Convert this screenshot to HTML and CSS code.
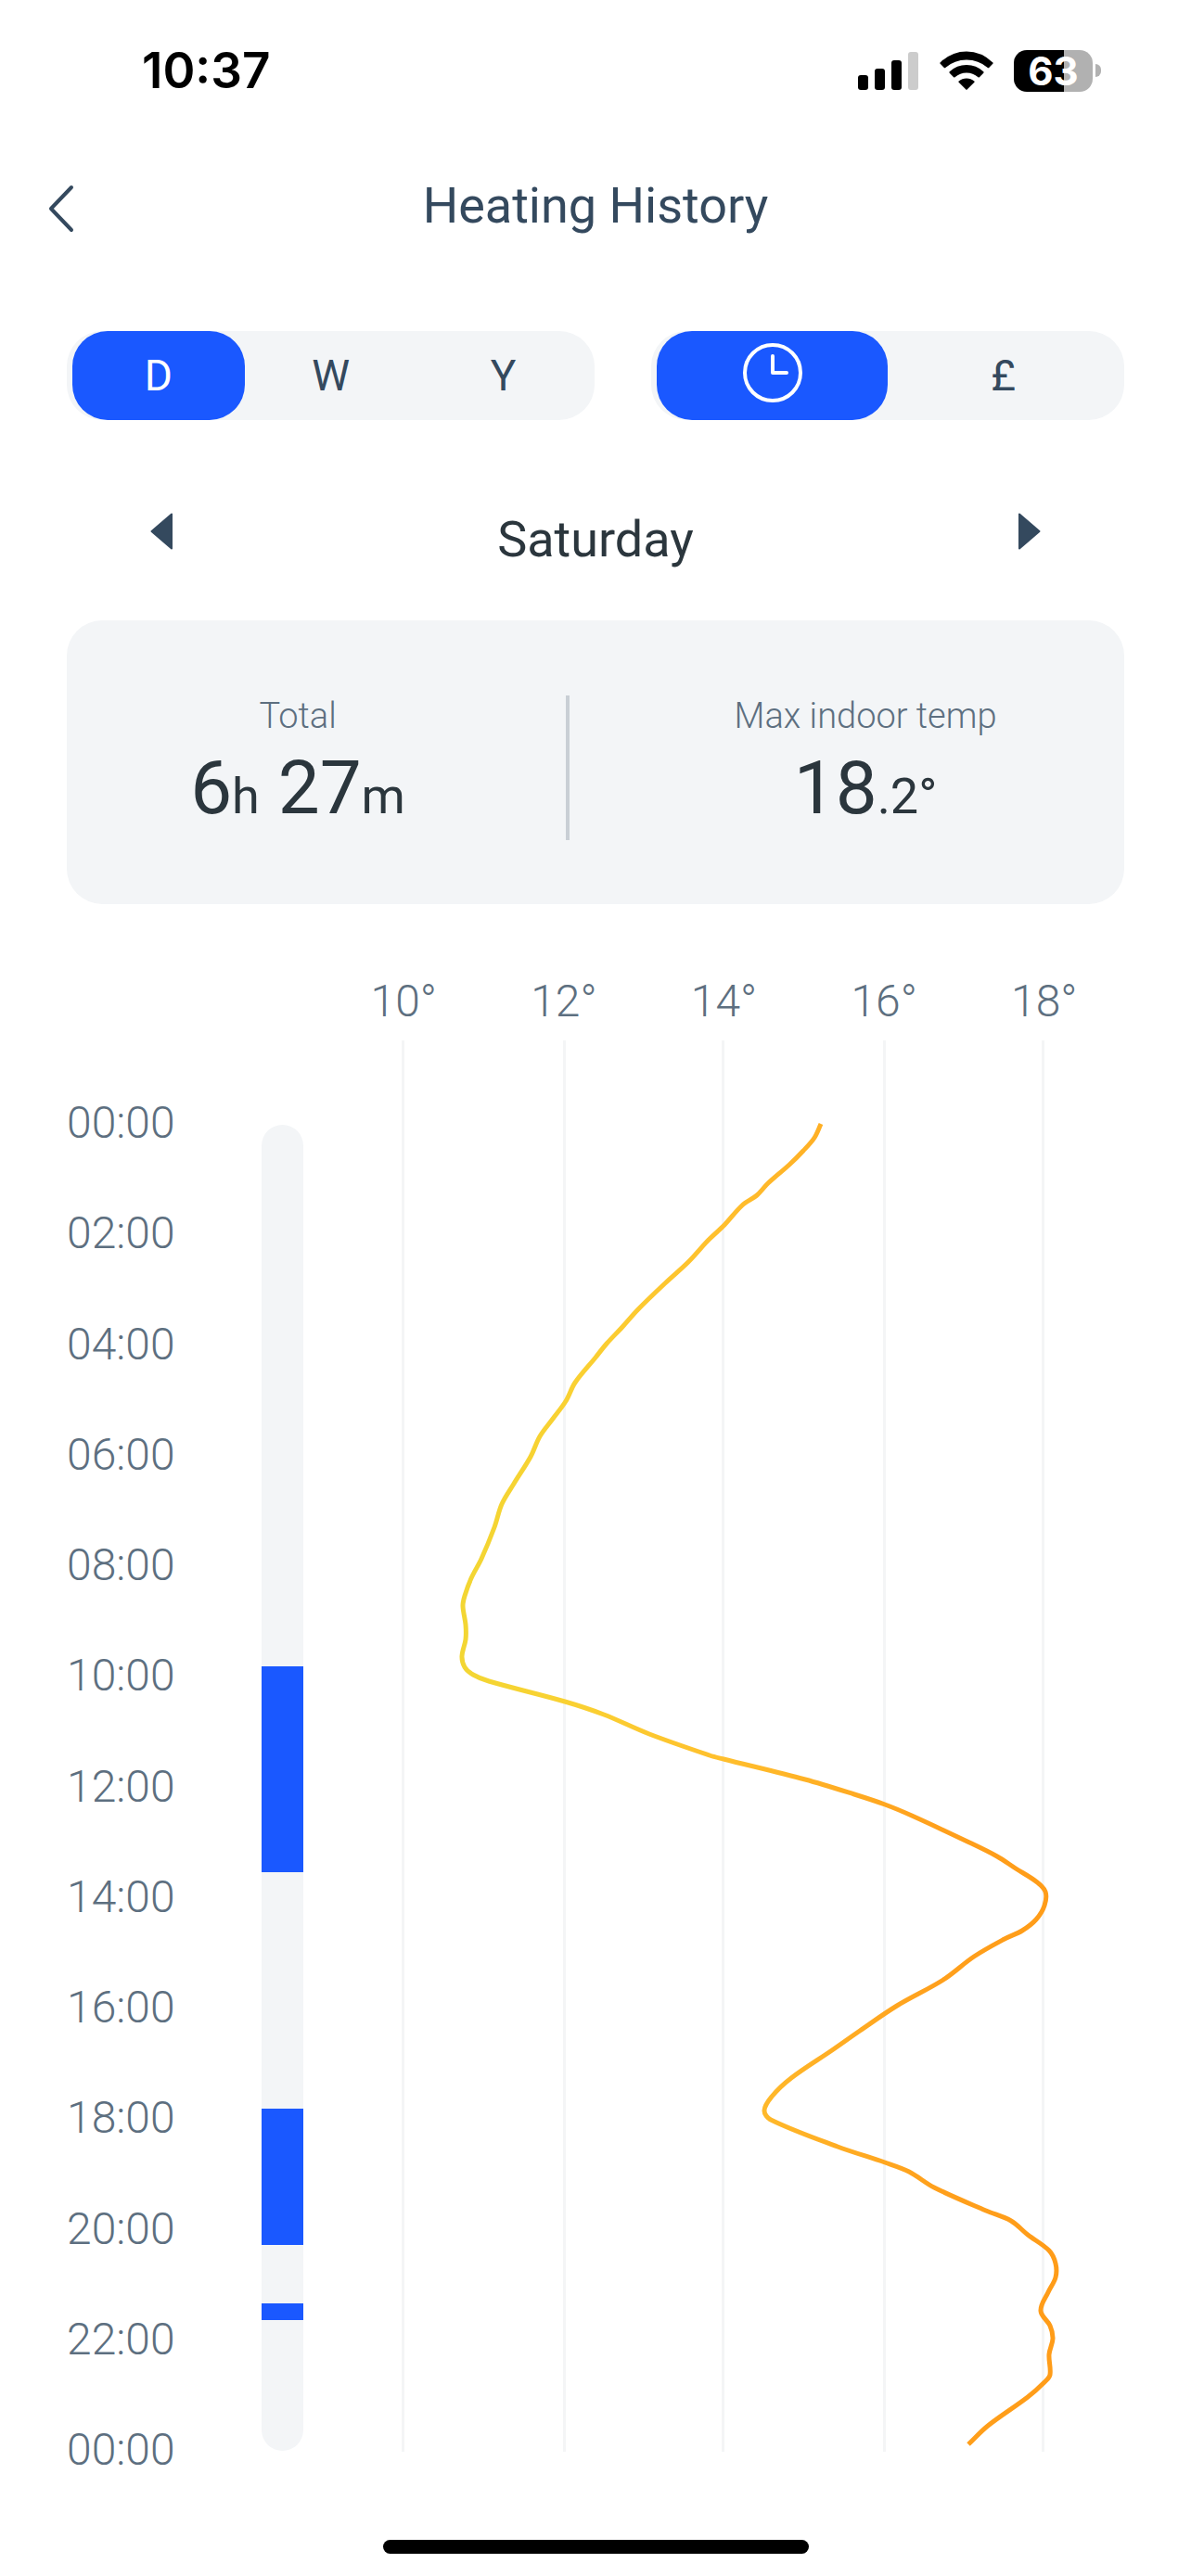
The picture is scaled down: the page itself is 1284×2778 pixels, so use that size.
FILE: index.html
```html
<!DOCTYPE html>
<html lang="en">
<head>
	<meta charset="UTF-8">
	<meta name="viewport" content="width=device-width">
	<title>Heating History</title>
	<link rel="stylesheet" href="styles.css">
</head>
<body>
	<div class="status">
		<span class="clock">10:37</span>
		<div class="status-icons">
			<svg class="signal" width="65" height="42" viewBox="0 0 65 42">
				<rect x="0" y="26" width="11" height="16" rx="3"/>
				<rect x="18" y="19" width="11" height="23" rx="3"/>
				<rect x="36" y="10" width="11" height="32" rx="3"/>
				<rect x="54" y="1" width="11" height="41" rx="3" fill="#ccc"/>
			</svg>
			<svg class="wifi" width="58" height="42" viewBox="0 0 58 42">
				<path d="M0.5 13.5Q0 13 0.6 12.4Q13 0.4 29 0.4Q45 0.4 57.4 12.4Q58 13 57.500 13.5L53.200 18Q52.500 18.700 51.800 18Q42 9.500 29 9.500Q16 9.500 6.200 18Q5.500 18.700 4.800 18Z"/>
				<path d="M10.700 23.700Q10 23 10.700 22.300Q18.500 15 29 15Q39.500 15 47.300 22.300Q48 23 47.300 23.700L42.900 28.200Q42.200 28.800 41.500 28.200Q36 23.500 29 23.500Q22 23.500 16.500 28.200Q15.800 28.800 15.100 28.200Z"/>
				<path d="M20.600 33.800Q20 33.200 20.700 32.600Q24.200 29.500 29 29.500Q33.800 29.500 37.300 32.600Q38 33.200 37.400 33.800L29.600 41.600Q29 42.200 28.400 41.600Z"/>
			</svg>
			<div class="battery"><span>63</span></div>
		</div>
	</div>

	<div class="header">
		<button class="back" aria-label="Back">
			<svg width="30" height="58" viewBox="0 0 30 58"><path d="M26 9L4 32L26 55"/></svg>
		</button>
		<h1>Heating History</h1>
	</div>

	<div class="main">
		<div class="tabs">
			<div class="tab-list period">
				<button class="active">D</button>
				<button>W</button>
				<button>Y</button>
			</div>
			<div class="tab-list unit">
				<button class="active" aria-label="Time">
					<svg width="64" height="64" viewBox="0 0 64 64"><circle cx="32" cy="32" r="30"/><path d="M32 14V32H47"/></svg>
				</button>
				<button>£</button>
			</div>
		</div>

		<div class="day">
			<button aria-label="Previous day"><svg width="24" height="40" viewBox="0 0 24 40"><path d="M23 1.500V38.500L1.500 20Z"/></svg></button>
			<h2>Saturday</h2>
			<button aria-label="Next day"><svg width="24" height="40" viewBox="0 0 24 40"><path d="M1 1.500V38.500L22.500 20Z"/></svg></button>
		</div>

		<div class="card">
			<div class="stat">
				<p class="label">Total</p>
				<p class="value">6<small>h</small> 27<small>m</small></p>
			</div>
			<div class="line"></div>
			<div class="stat">
				<p class="label">Max indoor temp</p>
				<p class="value">18<small>.2°</small></p>
			</div>
		</div>

		<div class="chart">
			<ul class="times">
				<li>00:00</li>
				<li>02:00</li>
				<li>04:00</li>
				<li>06:00</li>
				<li>08:00</li>
				<li>10:00</li>
				<li>12:00</li>
				<li>14:00</li>
				<li>16:00</li>
				<li>18:00</li>
				<li>20:00</li>
				<li>22:00</li>
				<li>00:00</li>
			</ul>
			<div class="usage">
				<i style="top: 40.84%; height: 15.52%"></i>
				<i style="top: 74.2%; height: 10.28%"></i>
				<i style="top: 88.88%; height: 1.26%"></i>
			</div>
			<div class="plot">
				<div class="temps">
					<span>10°</span>
					<span>12°</span>
					<span>14°</span>
					<span>16°</span>
					<span>18°</span>
				</div>
				<svg class="graph" viewBox="349 1122 863 1522" preserveAspectRatio="none">
					<defs>
						<linearGradient id="heat" gradientUnits="userSpaceOnUse" x1="500" y1="0" x2="1138" y2="0">
							<stop offset="0" stop-color="#f3d633"/>
							<stop offset="0.2" stop-color="#fad032"/>
							<stop offset="0.44" stop-color="#ffbf2d"/>
							<stop offset="0.62" stop-color="#ffae24"/>
							<stop offset="0.8" stop-color="#ffa01c"/>
							<stop offset="1" stop-color="#ff9c18"/>
						</linearGradient>
					</defs>
					<g class="grid">
						<path d="M434.500 1122V2644"/>
						<path d="M608.500 1122V2644"/>
						<path d="M779.500 1122V2644"/>
						<path d="M953.500 1122V2644"/>
						<path d="M1124.500 1122V2644"/>
					</g>
					<path id="curve" stroke="url(#heat)"/>
				</svg>
			</div>
		</div>
	</div>

	<div class="home"></div>
	<script src="chart.js"></script>
</body>
</html>
```
FILE: styles.css
```css
*{
	box-sizing: border-box;
	margin: 0;
	padding: 0;
}
body{
	background: #fff;
	color: #34495e;
	font-family: Roboto, "Liberation Sans", sans-serif;
}
button{
	border: 0;
	background: none;
	color: inherit;
	font: inherit;
	cursor: pointer;
}
svg{
	display: block;
}
/* status bar */
.status{
	display: flex;
	justify-content: space-between;
	align-items: center;
	height: 152px;
	padding: 0 97px 0 153px;
	color: #000;
	font-family: Inter, sans-serif;
}
.clock{
	font-size: 53px;
	font-weight: 600;
}
.status-icons{
	display: flex;
	align-items: center;
}
.wifi{
	margin: 0 22px 0 23px;
}
.battery{
	position: relative;
	width: 85px;
	height: 45px;
	margin-right: 9px;
	border-radius: 14px;
	background: linear-gradient(to right, #000 54px, #b1b1b1 54px);
	color: #fff;
	font-size: 42px;
	font-weight: 700;
	line-height: 45px;
	text-align: center;
}
.battery:after{
	content: "";
	position: absolute;
	right: -9px;
	top: 15px;
	width: 6px;
	height: 14px;
	border-radius: 0 6px 6px 0;
	background: #b1b1b1;
}
/* header */
.header{
	display: grid;
	grid-template-columns: 100px 1fr 100px;
	align-items: center;
	height: 139px;
	padding: 0 51px;
}
.header h1{
	font-size: 54px;
	font-weight: 400;
	text-align: center;
}
.back{
	justify-self: start;
}
.back path{
	fill: none;
	stroke: #34495e;
	stroke-width: 4;
	stroke-linecap: round;
	stroke-linejoin: round;
}
.main{
	padding: 66px 72px 0;
}
/* tabs */
.tabs{
	display: flex;
	gap: 61px;
}
.tab-list{
	display: flex;
	height: 96px;
	padding: 0 6px;
	border-radius: 38px;
	background: #f3f5f7;
}
.period{
	flex: 570;
}
.unit{
	flex: 509;
}
.tab-list button{
	display: flex;
	flex: 1;
	justify-content: center;
	align-items: center;
	border-radius: 38px;
	font-size: 46px;
}
.tab-list .active{
	background: #1a58ff;
	color: #fff;
}
.tab-list svg{
	margin-bottom: 6px;
	fill: none;
	stroke: #fff;
	stroke-width: 4;
	stroke-linecap: round;
	stroke-linejoin: round;
}
/* day */
.day{
	display: flex;
	justify-content: space-between;
	align-items: flex-start;
	padding: 93px 90px 51px;
}
.day button{
	display: flex;
	align-items: center;
	height: 54px;
}
.day path{
	fill: #34495e;
	stroke: #34495e;
	stroke-width: 2;
	stroke-linejoin: round;
}
.day h2{
	color: #2b363d;
	font-size: 54px;
	font-weight: 400;
	line-height: 72px;
}
/* card */
.card{
	display: grid;
	grid-template-columns: 25fr auto 28fr;
	align-items: end;
	padding: 79px 0 69px;
	border-radius: 38px;
	background: #f3f5f7;
}
.stat{
	height: 158px;
	text-align: center;
}
.label{
	margin-bottom: 6px;
	color: #5d6f80;
	font-size: 38px;
	font-weight: 300;
	line-height: 48px;
}
.value{
	color: #2b363d;
	font-size: 80px;
	line-height: 96px;
}
.value small{
	font-size: 54px;
}
.line{
	width: 4px;
	height: 156px;
	margin: 0 40px;
	background: #c9cfd5;
}
/* chart */
.chart{
	display: grid;
	grid-template-columns: 210px 45px 1fr;
	align-items: start;
	padding-top: 75px;
	color: #5d6f80;
	font-size: 48px;
	font-weight: 300;
	line-height: 60px;
}
.times{
	display: flex;
	flex-direction: column;
	justify-content: space-between;
	height: 1491px;
	margin-top: 131px;
	list-style: none;
}
.usage{
	position: relative;
	height: 1430px;
	margin-top: 163px;
	border-radius: 23px;
	background: #f3f5f7;
	overflow: hidden;
}
.usage i{
	position: absolute;
	left: 0;
	width: 100%;
	background: #1a58ff;
}
.plot{
	padding-left: 22px;
}
.temps{
	display: grid;
	grid-template-columns: repeat(5, 1fr);
	margin-bottom: 12px;
	text-align: center;
}
.graph{
	width: 100%;
	height: 1522px;
	fill: none;
	overflow: visible;
}
.grid path{
	stroke: #f4f5f6;
	stroke-width: 3;
}
#curve{
	stroke-width: 5;
}
.home{
	width: 459px;
	height: 15px;
	margin: 67px auto 24px;
	border-radius: 8px;
	background: #000;
}
```
FILE: chart.js
```javascript
var points = [
	[885,1212],[878,1227],[866,1241],[851,1256],[828,1276],[816,1289],[800,1300],
	[781,1321],[764,1337],[742,1361],[718,1383],[688,1412],[671,1431],[654,1449],
	[642,1464],[620,1491],[610,1511],[596,1530],[582,1549],[572,1571],[554,1600],
	[541,1622],[533,1647],[519,1681],[508,1702],[501,1721],[499,1732],[502,1752],
	[502,1768],[498,1786],[501,1798],[510,1806],[527,1813],[609,1835],[651,1849],
	[700,1870],[765,1893],[780,1897],[868,1919],[921,1935],[954,1946],[983,1958],
	[1043,1986],[1075,2002],[1095,2015],[1117,2029],[1127,2040],[1126,2055],
	[1117,2070],[1102,2082],[1083,2091],[1050,2110],[1017,2135],[967,2163],
	[927,2190],[897,2211],[853,2241],[832,2261],[824,2276],[831,2286],[903,2315],
	[954,2332],[980,2342],[1007,2359],[1063,2384],[1090,2395],[1108,2410],
	[1131,2427],[1138,2441],[1138,2456],[1130,2472],[1122,2492],[1132,2508],
	[1135,2522],[1131,2539],[1132,2561],[1126,2569],[1108,2585],[1065,2616],[1044,2636]
];
// smooth line through all the points
var d = "M" + points[0];
for(var i = 0; i < points.length - 1; i++){
	var p0 = points[i - 1] || points[i];
	var p1 = points[i];
	var p2 = points[i + 1];
	var p3 = points[i + 2] || p2;
	// shorten the handles next to a long step
	var len = Math.hypot(p2[0] - p1[0], p2[1] - p1[1]);
	var k1 = len / (Math.hypot(p2[0] - p0[0], p2[1] - p0[1]) * 3);
	var k2 = len / (Math.hypot(p3[0] - p1[0], p3[1] - p1[1]) * 3);
	d += "C" + [
		p1[0] + (p2[0] - p0[0]) * k1, p1[1] + (p2[1] - p0[1]) * k1,
		p2[0] - (p3[0] - p1[0]) * k2, p2[1] - (p3[1] - p1[1]) * k2,
		p2[0], p2[1]
	];
}
document.getElementById("curve").setAttribute("d", d);
```
